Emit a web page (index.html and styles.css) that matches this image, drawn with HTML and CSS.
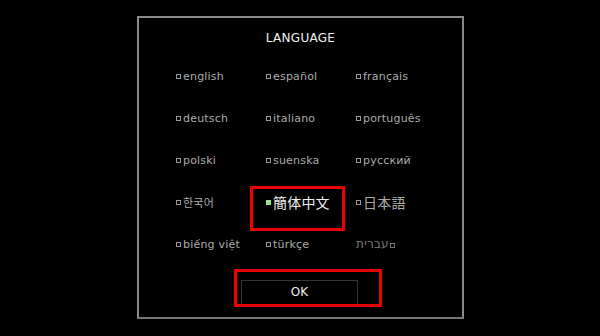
FILE: index.html
```html
<!DOCTYPE html>
<html lang="en">
<head>
    <meta charset="UTF-8">
    <title>Language</title>
    <link rel="stylesheet" href="styles.css">
</head>
<body>
    <div class="lang-dialog">
        <div class="lang-title">LANGUAGE</div>
        <ul class="lang-list">
            <li><span class="lang-box"></span>english</li>
            <li><span class="lang-box"></span>español</li>
            <li><span class="lang-box"></span>français</li>
            <li><span class="lang-box"></span>deutsch</li>
            <li><span class="lang-box"></span>italiano</li>
            <li><span class="lang-box"></span>português</li>
            <li><span class="lang-box"></span>polski</li>
            <li><span class="lang-box"></span>suenska</li>
            <li><span class="lang-box"></span>русский</li>
            <li class="cjk-small"><span class="lang-box"></span>한국어</li>
            <li class="cjk active"><span class="lang-box"></span>簡体中文<span class="mark mark-lang"></span></li>
            <li class="cjk"><span class="lang-box"></span>日本語</li>
            <li><span class="lang-box"></span>biếng việt</li>
            <li><span class="lang-box"></span>türkçe</li>
            <li class="dim"><span dir="rtl">עברית</span><span class="lang-box"></span></li>
        </ul>
        <div class="lang-ok">
            <div class="ok-btn">OK</div>
            <span class="mark mark-ok"></span>
        </div>
    </div>
</body>
</html>
```

FILE: styles.css
```css
html, body {
    margin: 0;
    background: #000;
}

body {
    width: 600px;
    height: 336px;
    overflow: hidden;
    padding-top: 16px;
    box-sizing: border-box;
    font-family: "DejaVu Sans", sans-serif;
}

.lang-dialog {
    margin-left: 137px;
    width: 327px;
    height: 303px;
    box-sizing: border-box;
    border: 2px solid #8a8a8a;
    border-bottom-color: #777;
    padding-top: 12px;
}

.lang-title {
    text-align: center;
    color: #f2f2f2;
    font-size: 12px;
    line-height: 16px;
    letter-spacing: 0.3px;
}

.lang-list {
    list-style: none;
    margin: 9px 0 0;
    padding: 0 0 0 37px;
    display: grid;
    grid-template-columns: 90px 90px 90px;
    grid-auto-rows: 42px;
}

    .lang-list li {
        position: relative;
        display: flex;
        align-items: center;
        color: #ababab;
        font-size: 11px;
        letter-spacing: 0.2px;
    }

        .lang-list li.cjk {
            font-size: 14px;
            font-family: "Noto Sans CJK JP", sans-serif;
        }

        .lang-list li.cjk-small {
            font-size: 11px;
            font-family: "Noto Sans CJK KR", sans-serif;
        }

        .lang-list li.active {
            color: #f0f0f0;
        }

        .lang-list li.dim {
            color: #7a7a7a;
            font-size: 12px;
        }

.lang-box {
    width: 3px;
    height: 3px;
    border: 1px solid #9a9a9a;
    margin: 1px 2px 0 0;
    flex: none;
}

.dim .lang-box {
    margin: 2px 0 0 1px;
    border-color: #777;
}

.active .lang-box {
    background: #9ee08f;
    border-color: #9ee08f;
}

.lang-ok {
    position: relative;
    width: 117px;
    margin: 15px 0 0 102px;
}

.ok-btn {
    height: 25px;
    box-sizing: border-box;
    border: 1px solid #353535;
    color: #eee;
    font-size: 12px;
    line-height: 23px;
    text-align: center;
}

/* red annotation frames */
.mark {
    position: absolute;
    border: 3px solid #ea0000;
    box-sizing: border-box;
}

.mark-lang {
    left: -16px;
    top: 5px;
    width: 95px;
    height: 45px;
}

.mark-ok {
    left: -7px;
    top: -11px;
    width: 148px;
    height: 38px;
}
```
